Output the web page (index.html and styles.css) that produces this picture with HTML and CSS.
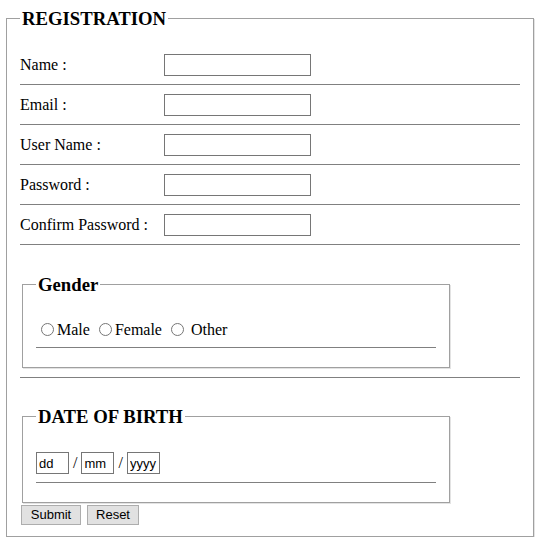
FILE: index.html
```html
<!DOCTYPE html>
<html>
<head>
<meta charset="utf-8">
<title>Registration</title>
<link rel="stylesheet" href="styles.css">
</head>
<body>
<form class="form">
  <fieldset class="reg">
    <legend class="legend">REGISTRATION</legend>
    <div class="rows">
      <div class="row"><label class="label">Name :</label><input class="text" type="text"></div>
      <div class="row"><label class="label">Email :</label><input class="text" type="text"></div>
      <div class="row"><label class="label">User Name :</label><input class="text" type="text"></div>
      <div class="row"><label class="label">Password :</label><input class="text" type="password"></div>
      <div class="row"><label class="label">Confirm Password :</label><input class="text" type="password"></div>
    </div>
    <fieldset class="sub gender">
      <legend class="legend">Gender</legend>
      <div class="radios"><input class="radio" type="radio" name="g">Male <input class="radio" type="radio" name="g">Female <input class="radio" type="radio" name="g"> Other</div>
      <div class="line"></div>
    </fieldset>
    <div class="sep"></div>
    <fieldset class="sub dob">
      <legend class="legend">DATE OF BIRTH</legend>
      <div class="dates"><input class="date" type="text" value="dd"> / <input class="date" type="text" value="mm"> / <input class="date" type="text" value="yyyy"></div>
      <div class="line"></div>
    </fieldset>
    <div class="buttons">
      <button class="btn" type="submit">Submit</button>
      <button class="btn" type="reset">Reset</button>
    </div>
  </fieldset>
</form>
</body>
</html>
```
FILE: styles.css
```css
html, body {
  background: #ffffff;
}
body {
  margin: 8px 8px 8px 6px;
  font-family: "Liberation Serif", "Times New Roman", serif;
  font-size: 16px;
  color: #000000;
}
.form {
  margin: 0;
}
.reg {
  width: 500px;
  margin: 0;
  padding: 6px 13px 11px 13px;
  border: 1px solid #a0a0a0;
  box-shadow: 1px 1px 0 0 #e3e3e3;
}
.legend {
  padding: 0 2px;
  font-family: "Liberation Serif", "Times New Roman", serif;
  font-size: 18.72px;
  font-weight: bold;
  line-height: 21px;
}
.rows {
  margin-top: 10px;
}
.row {
  display: flex;
  align-items: center;
  height: 22px;
  padding: 9px 0 8px 0;
  border-bottom: 1px solid #808080;
}
.label {
  width: 144px;
  flex: none;
}
.text {
  box-sizing: border-box;
  width: 147px;
  height: 22px;
  margin: 0;
  padding: 1px 2px;
  border: 1px solid #767676;
  font-family: "Liberation Sans", Arial, sans-serif;
  font-size: 13px;
}
.sub {
  width: 400px;
  margin: 0 2px;
  padding: 6px 13px 11px 13px;
  border: 1px solid #a0a0a0;
  box-shadow: 1px 1px 0 0 #e3e3e3;
}
.gender {
  margin-top: 29px;
}
.radios {
  height: 20px;
  line-height: 20px;
  margin-top: 19px;
  margin-bottom: 7px;
}
.radio {
  width: 13px;
  height: 13px;
  margin: 3px 3px 0 5px;
  vertical-align: -1px;
}
.line {
  border-top: 1px solid #808080;
  margin-bottom: 8px;
}
.sep {
  margin-top: 9px;
  border-top: 1px solid #808080;
}
.dob {
  margin-top: 28px;
}
.dates {
  height: 22px;
  line-height: 22px;
  margin-top: 19px;
  margin-bottom: 8px;
}
.date {
  box-sizing: border-box;
  width: 33px;
  height: 22px;
  margin: 0;
  padding: 1px 2px;
  border: 1px solid #767676;
  font-family: "Liberation Sans", Arial, sans-serif;
  font-size: 13px;
  color: #000000;
  vertical-align: top;
}
.buttons {
  display: flex;
  gap: 6px;
  margin-top: 2px;
  padding-left: 1px;
}
.btn {
  box-sizing: border-box;
  height: 20px;
  margin: 0;
  padding: 0 8px;
  border: 1px solid #adadad;
  background: #e1e1e1;
  color: #000000;
  font-family: "Liberation Sans", Arial, sans-serif;
  font-size: 13px;
  line-height: 18px;
}
.btn:first-child {
  width: 60px;
}
.btn:last-child {
  width: 52px;
}
```
